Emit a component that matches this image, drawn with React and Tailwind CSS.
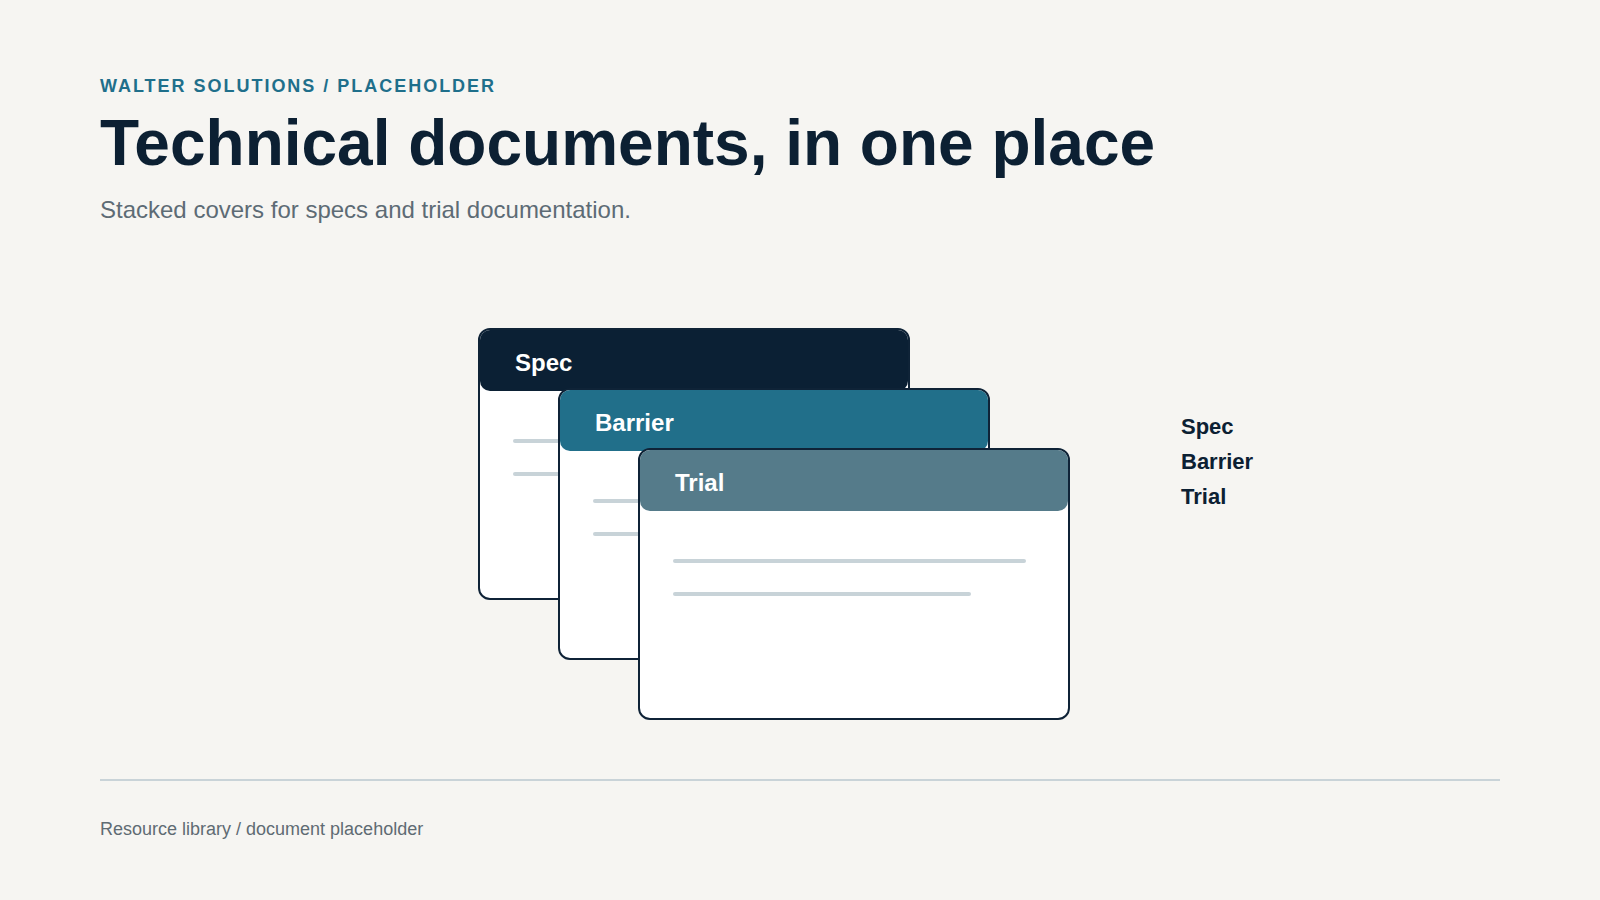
export default function App() {
  const cards = [
    { name: "Spec", head: "bg-[#0b2034]", pos: "left-0 top-0" },
    { name: "Barrier", head: "bg-[#216f8a]", pos: "left-[80px] top-[60px]" },
    { name: "Trial", head: "bg-[#557b8a]", pos: "left-[160px] top-[120px]" },
  ];
  return (
    <div
      className="min-h-[900px] w-full bg-[#f6f5f2] px-[100px] pt-[74px]"
      style={{ fontFamily: '"Liberation Sans", Arial, sans-serif' }}
    >
      <div className="text-[18px] leading-6 font-bold tracking-[0.11em] text-[#1f6f8b]">
        WALTER SOLUTIONS / PLACEHOLDER
      </div>
      <h1 className="mt-[9px] text-[64px] leading-[72px] font-bold text-[#0c2033]">
        Technical documents, in one place
      </h1>
      <p className="mt-[15px] text-[24px] leading-8 text-[#5d6b75]">
        Stacked covers for specs and trial documentation.
      </p>

      <div className="mt-[102px] flex items-start">
        <div className="relative ml-[378px] h-[392px] w-[592px] shrink-0">
          {cards.map((c) => (
            <div
              key={c.name}
              className={`absolute ${c.pos} h-[272px] w-[432px] rounded-[12px] border-2 border-[#0f2337] bg-white`}
            >
              <div
                className={`${c.head} flex h-[61px] items-center rounded-[10px] pl-[35px] pt-1 text-[24px] font-bold text-white`}
              >
                {c.name}
              </div>
              <div className="pl-[33px] pt-[48px]">
                <div className="h-1 w-[353px] rounded-full bg-[#c8d3d8]" />
                <div className="mt-[29px] h-1 w-[298px] rounded-full bg-[#c8d3d8]" />
              </div>
            </div>
          ))}
        </div>
        <div className="ml-[111px] mt-[81px] flex flex-col text-[22px] leading-[35px] font-bold text-[#0c2033]">
          <span>Spec</span>
          <span>Barrier</span>
          <span>Trial</span>
        </div>
      </div>

      <div className="mt-[59px] h-[2px] w-full bg-[#c9d3d8]" />
      <div className="mt-[34px] text-[18px] leading-7 text-[#5f6b73]">
        Resource library / document placeholder
      </div>
    </div>
  );
}
